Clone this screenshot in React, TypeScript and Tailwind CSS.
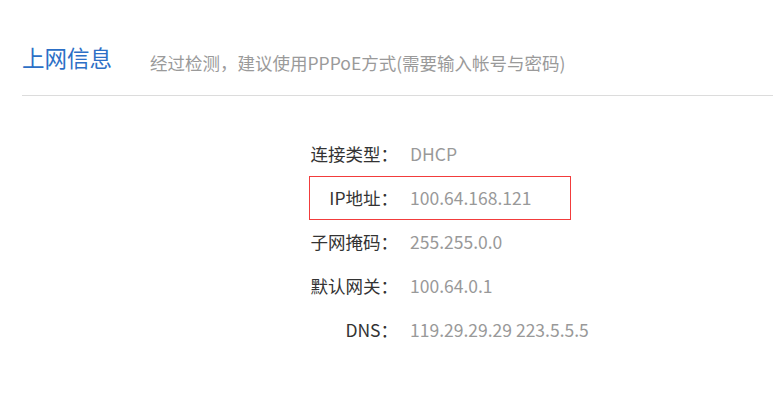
const rows = [
  { label: "连接类型：", value: "DHCP" },
  { label: "IP地址：", value: "100.64.168.121", boxed: true },
  { label: "子网掩码：", value: "255.255.0.0" },
  { label: "默认网关：", value: "100.64.0.1" },
  { label: "DNS：", value: "119.29.29.29 223.5.5.5" },
];

export default function App() {
  return (
    <div
      className="w-full h-[403px] bg-white pl-[22px]"
      style={{ fontFamily: '"Noto Sans CJK SC", "Noto Sans", sans-serif' }}
    >
      {/* header */}
      <div className="flex items-end h-[96px] pb-[22px] border-b border-[#dcdcdc]">
        <h1 className="text-[22.5px] leading-[32px] text-[#2c6fc6] font-normal">上网信息</h1>
        <p className="ml-[38px] mb-[-3px] text-[17.5px] leading-[26px] text-[#9a9a9a] whitespace-nowrap">
          经过检测，建议使用PPPoE方式(需要输入帐号与密码)
        </p>
      </div>

      {/* info rows */}
      <div className="ml-[287px] mt-[36px] flex flex-col w-[262px]">
        {rows.map((r) => (
          <div
            key={r.label}
            className={`flex items-center h-[44px] text-[17.5px] ${
              r.boxed ? "border border-[#f23c3c]" : "border border-transparent"
            }`}
          >
            <span className="w-[88px] shrink-0 text-right text-[#333333] whitespace-nowrap">{r.label}</span>
            <span className="ml-[12px] shrink-0 text-[#999999] whitespace-nowrap">{r.value}</span>
          </div>
        ))}
      </div>
    </div>
  );
}
